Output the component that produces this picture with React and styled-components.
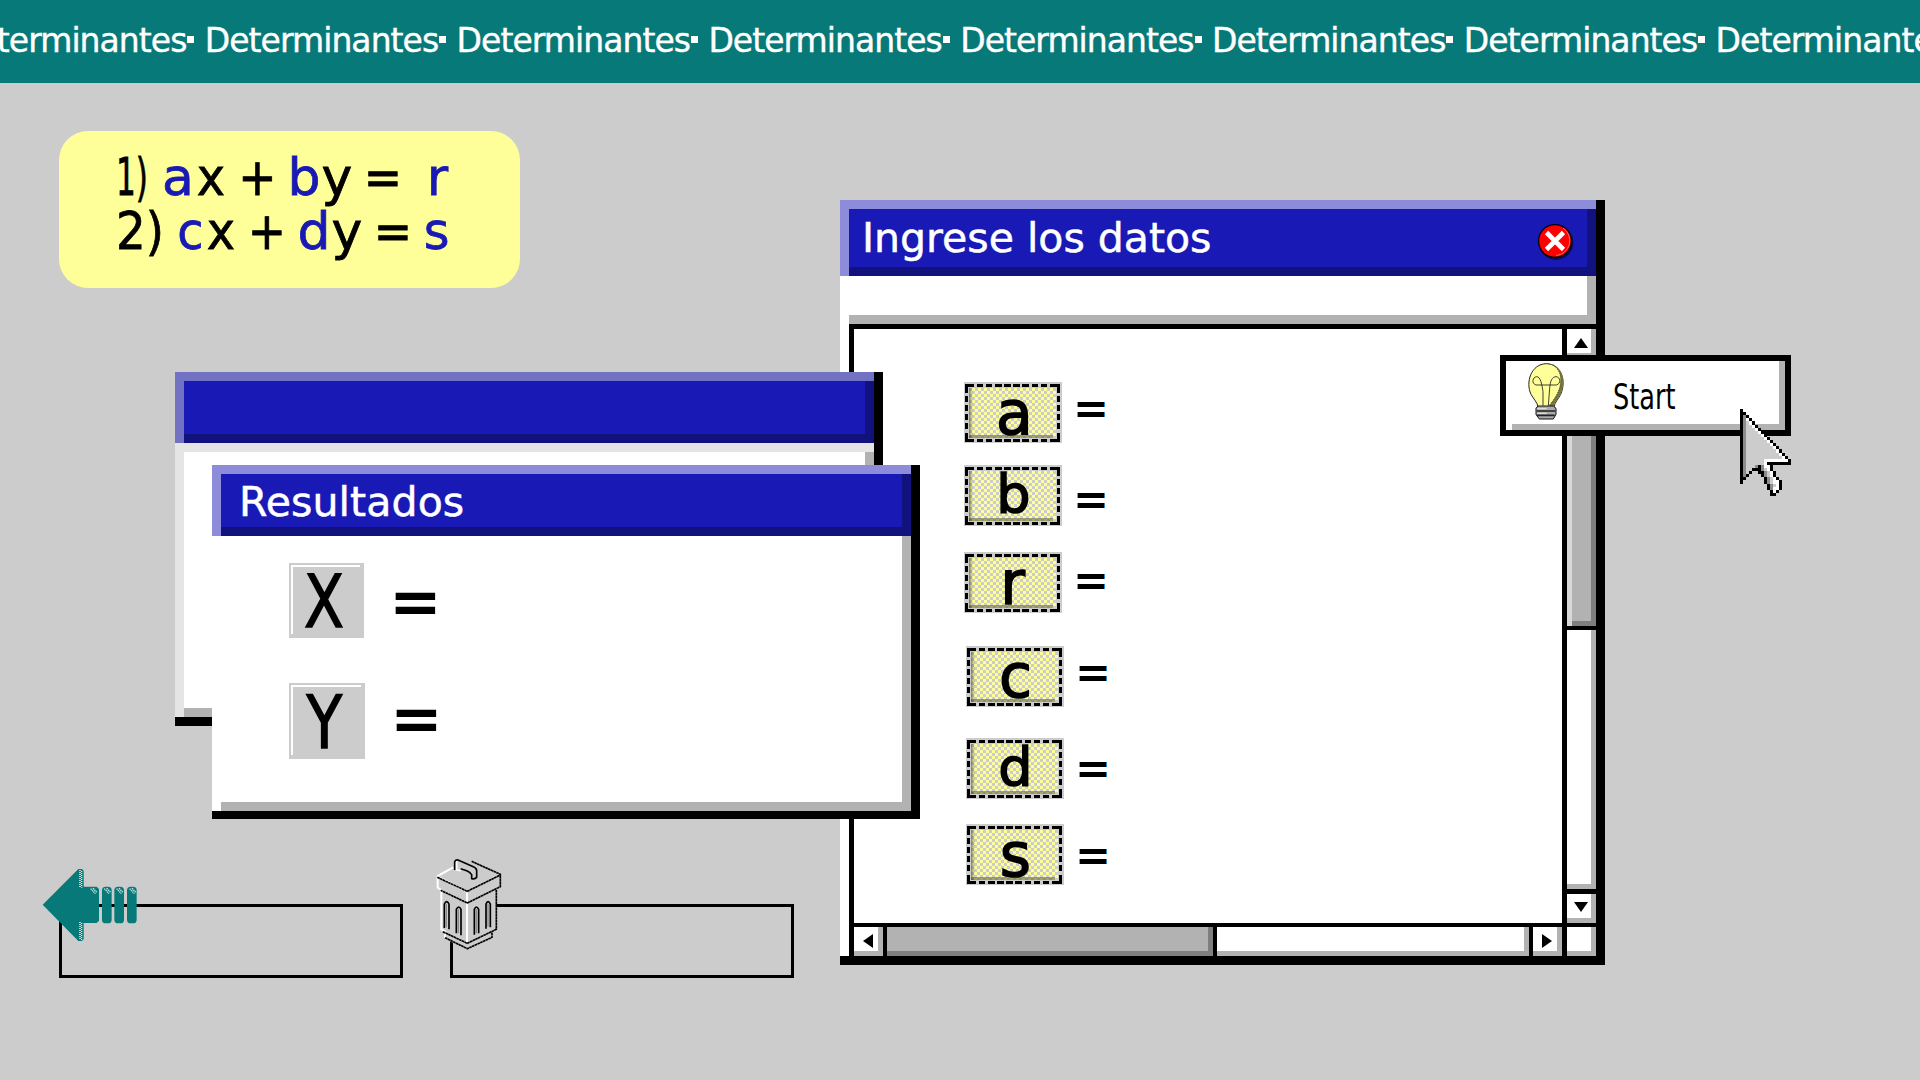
import React from "react";
import styled, { createGlobalStyle } from "styled-components";

const Global = createGlobalStyle`
  * { box-sizing: border-box; }
  body { margin: 0; background: #ccc; overflow: hidden; font-family: "DejaVu Sans", sans-serif; color: #000; }
`;

const Desktop = styled.div`
  position: relative;
  width: 1920px;
  height: 1080px;
  overflow: hidden;
  background: #ccc;
`;

const Banner = styled.header`
  height: 83px;
  display: flex;
  background: #087979;
  color: #fff;
  overflow: hidden;
`;

const BannerTrack = styled.div`
  display: flex;
  margin-left: -47px;
`;

const BannerItem = styled.span`
  flex: none;
  width: 251.8px;
  display: flex;
  align-items: baseline;
  font-size: 33px;
  line-height: 39px;
  padding-top: 21px;
  letter-spacing: -0.95px;
  white-space: nowrap;
  -webkit-text-stroke: 0.4px #fff;
`;

const Bullet = styled.i`
  width: 7px;
  height: 7px;
  margin: 15px 0 0 1px;
  background: #fff;
  align-self: flex-start;
`;

const Equations = styled.section`
  position: absolute;
  left: 59px;
  top: 131px;
  width: 461px;
  height: 157px;
  padding: 14px 0 0 60px;
  border-radius: 29px;
  background: #ffff99;
`;

const EquationRow = styled.div`
  display: flex;
  height: 54px;
  line-height: 64px;
  font-size: 52px;
`;

const Token = styled.span`
  flex: none;
  display: flex;
  justify-content: center;
  width: ${(p) => p.$w}px;
  margin-left: ${(p) => p.$gap || 0}px;
  color: ${(p) => (p.$key ? "#1919b5" : "#000")};
  -webkit-text-stroke: 0.8px ${(p) => (p.$key ? "#1919b5" : "#000")};
  transform: scaleX(${(p) => p.$scale || 1});
`;

const Window = styled.section`
  position: absolute;
  left: ${(p) => p.$x}px;
  top: ${(p) => p.$y}px;
  width: ${(p) => p.$w}px;
  height: ${(p) => p.$h}px;
  display: flex;
  flex-direction: column;
  background: #000;
  padding-right: 9px;
  ${(p) => p.$foot && `padding-bottom: ${p.$foot}px;`}
`;

const TitleBar = styled.div`
  flex: none;
  height: ${(p) => p.$h}px;
  padding: 9px 0 0 9px;
  background: ${(p) => p.$edge};
`;

const TitleFace = styled.div`
  height: 100%;
  display: flex;
  align-items: center;
  justify-content: space-between;
  padding: 0 16px 0 ${(p) => p.$pad || 0}px;
  background: #1919b5;
  box-shadow: inset -9px -9px 0 #12127e;
`;

const Title = styled.h2`
  margin: 0 0 ${(p) => p.$lift}px;
  color: #fff;
  font-size: 41px;
  font-weight: 400;
  line-height: 48px;
  white-space: nowrap;
  letter-spacing: ${(p) => p.$track || 0}px;
  -webkit-text-stroke: 0.5px #fff;
`;

const BackBody = styled.div`
  flex: 1;
  padding: 9px 0 0 9px;
  background: #e5e5e5;
`;

const Face = styled.div`
  height: 100%;
  background: #fff;
  box-shadow: inset -9px -9px 0 #b2b2b2;
`;

const ResultBody = styled.div`
  flex: 1;
  display: flex;
  background: #fff;
  border-right: 9px solid #b2b2b2;
`;

const ResultInner = styled.div`
  flex: 1;
  display: flex;
  flex-direction: column;
  gap: 45px;
  padding: 27px 0 0 77px;
  background: linear-gradient(#b2b2b2, #b2b2b2) 9px 100% / 100% 9px no-repeat, #fff;
`;

const ResultRow = styled.div`
  display: flex;
`;

const ResultKey = styled.div`
  width: ${(p) => p.$s}px;
  height: ${(p) => p.$s}px;
  padding-right: 5px;
  padding-top: 3px;
  display: flex;
  align-items: center;
  justify-content: center;
  background:
    linear-gradient(#fff, #fff) 2px 2px / calc(100% - 6px) 2px no-repeat,
    linear-gradient(#fff, #fff) 2px 2px / 2px calc(100% - 6px) no-repeat,
    #ccc;
  font-size: 73px;
  line-height: 76px;
  -webkit-text-stroke: 1.4px #000;
  span { display: block; transform: scaleX(0.8); }
`;

const ResultEquals = styled.span`
  width: 41px;
  margin: ${(p) => p.$top}px 0 0 31px;
  display: flex;
  justify-content: center;
  height: 40px;
  font-size: 63px;
  line-height: 40px;
  font-weight: 700;
`;

const Toolbar = styled.div`
  flex: none;
  height: 48px;
  padding-left: 9px;
  background: #fff;
`;

const Workspace = styled.div`
  flex: 1;
  border-left: 9px solid #fff;
  background: #000;
  padding: 5px 0 0 5px;
  display: grid;
  grid-template-columns: 708px 29px;
  grid-template-rows: 594px 29px;
  gap: 4px 5px;
`;

const Fields = styled.div`
  background: #fff;
  padding: 53px 0 0 110px;
`;

const FieldRow = styled.div`
  height: 61px;
  display: flex;
  margin-bottom: ${(p) => p.$after}px;
  padding-left: ${(p) => p.$shift}px;
`;

const KeyCap = styled.div`
  width: 98px;
  height: 61px;
  padding: 2px 2px 1px 1px;
  background: #ccc;
`;

const KeyDash = styled.div`
  height: 58px;
  width: 95px;
  padding: 4px;
  background:
    linear-gradient(#000 0 0) 0 0 / 9px 3px no-repeat,
    linear-gradient(#000 0 0) 0 0 / 3px 9px no-repeat,
    linear-gradient(#000 0 0) 100% 0 / 9px 3px no-repeat,
    linear-gradient(#000 0 0) 100% 0 / 3px 9px no-repeat,
    linear-gradient(#000 0 0) 0 100% / 9px 3px no-repeat,
    linear-gradient(#000 0 0) 0 100% / 3px 9px no-repeat,
    linear-gradient(#000 0 0) 100% 100% / 9px 3px no-repeat,
    linear-gradient(#000 0 0) 100% 100% / 3px 9px no-repeat,
    repeating-linear-gradient(90deg, #000 0 6.4px, #ccc 6.4px 9.1px) 12px 0 / 74px 3px no-repeat,
    repeating-linear-gradient(90deg, #000 0 6.4px, #ccc 6.4px 9.1px) 12px 100% / 74px 3px no-repeat,
    repeating-linear-gradient(180deg, #000 0 6.4px, #ccc 6.4px 9px) 0 12px / 3px 34px no-repeat,
    repeating-linear-gradient(180deg, #000 0 6.4px, #ccc 6.4px 9px) 100% 12px / 3px 34px no-repeat,
    #ccc;
`;

const KeyFace = styled.div`
  height: 50px;
  display: flex;
  justify-content: center;
  background:
    linear-gradient(90deg, rgba(60, 60, 20, .6), rgba(60, 60, 20, 0)) 0 0 / 4px 100% no-repeat,
    linear-gradient(rgba(90, 90, 60, .55) 0 0) 0 100% / calc(100% - 3px) 3px no-repeat,
    conic-gradient(#ffff99 25%, #ccc 0 50%, #ffff99 0 75%, #ccc 0) 0 0 / 6px 6px;
  font-size: ${(p) => p.$size}px;
  line-height: 50px;
  -webkit-text-stroke: 1.5px #000;
`;

const KeyLetter = styled.span`
  transform: translate(${(p) => p.$dx}px, ${(p) => p.$dy}px);
`;

const FieldEquals = styled.span`
  width: 28px;
  height: 30px;
  margin: ${(p) => p.$top}px 0 0 15px;
  display: flex;
  justify-content: center;
  font-size: 43px;
  line-height: 30px;
  font-weight: 700;
`;

const VScroll = styled.div`
  background: #000;
  display: grid;
  grid-template-rows: 29px 263px 259px 29px;
  gap: 4.6px;
`;

const HScroll = styled.div`
  background: #000;
  display: grid;
  grid-template-columns: 29px 326px 312px 29px;
  gap: 4px;
`;

const Cell = styled.div`
  display: flex;
  align-items: center;
  justify-content: center;
  padding: 0 2px 2px 0;
  background: #fff;
  box-shadow: inset -5px -5px 0 #b2b2b2;
`;

const Thumb = styled.div`
  background: #b2b2b2;
  border-left: ${(p) => (p.$lit ? "5px solid #d8d8d8" : "0")};
  box-shadow: inset -5px -5px 0 #7f7f7f;
`;

const StartButton = styled.button`
  position: absolute;
  left: 1500px;
  top: 355px;
  width: 291px;
  height: 81px;
  padding: 0;
  border: 6px solid #000;
  border-radius: 0;
  background:
    linear-gradient(#b2b2b2 0 0) 100% 0 / 6px 100% no-repeat,
    linear-gradient(#b2b2b2 0 0) 6px 100% / 100% 6px no-repeat,
    #fff;
  display: flex;
  align-items: flex-start;
  font-family: "DejaVu Sans", sans-serif;
  color: #000;
`;

const StartLabel = styled.span`
  margin: 16px 0 0 37px;
  font-size: 35px;
  line-height: 40px;
  transform-origin: left;
  transform: scaleX(0.73);
`;

const EmptyBox = styled.div`
  position: absolute;
  left: ${(p) => p.$x}px;
  top: 904px;
  width: 344px;
  height: 74px;
  border: 3px solid #000;
`;

const Sprite = styled.svg`
  position: absolute;
  left: ${(p) => p.$x}px;
  top: ${(p) => p.$y}px;
  overflow: visible;
`;

const BulbIcon = styled.svg`
  flex: none;
  margin-left: 10px;
`;

const CloseSvg = styled.svg`
  margin: -2px 4px 0 0;
`;

const Bulb = () => (
  <BulbIcon width="60" height="69" viewBox="0 18 180 207">
    <path d="M66 156 C64 142 54 134 45 118 C28 82 45 27 91 26 C136 27 152 78 134 118 C126 134 116 142 114 156Z" fill="#ffff99" stroke="#222" strokeWidth="3" />
    <path d="M112 30 C142 50 146 100 99 152 L112 155 C116 140 128 132 134 116 C152 78 140 42 112 30Z" fill="#77773f" />
    <path d="M112 30 C142 50 146 100 99 152" fill="none" stroke="#333" strokeWidth="3" strokeDasharray="3 3" />
    <path d="M81 152 V110 C78 90 74 65 62 65 C49 66 46 86 60 90 H121 C136 86 134 66 120 65 C107 66 103 78 101 100 L97 152" fill="none" stroke="#222" strokeWidth="2.6" />
    <path d="M66 153 H112 L120 160 V178 L112 192 H70 L60 178 V160Z" fill="#aaa" stroke="#111" strokeWidth="3" />
    <path d="M62 168 H118 M62 181 H116" stroke="#222" strokeWidth="5" />
    <path d="M64 161 H92 M64 175 H92" stroke="#ddd" strokeWidth="4" />
  </BulbIcon>
);

const CloseIcon = () => (
  <CloseSvg width="40" height="40" viewBox="0 0 40 40">
    <circle cx="20" cy="20.5" r="17.4" fill="#0c0c50" />
    <circle cx="19" cy="19" r="17" fill="#000" />
    <circle cx="19" cy="19" r="15.8" fill="red" />
    <path d="M27 6 A15 15 0 0 1 20 33.5" fill="none" stroke="#ff6666" strokeWidth="1" />
    <path d="M10.5 10.5 L27.5 27.5 M27.5 10.5 L10.5 27.5" stroke="#fff" strokeWidth="4.6" />
  </CloseSvg>
);

const Tri = ({ d }) => (
  <svg width="14" height="14" viewBox="0 0 14 14"><path d={d} fill="#000" /></svg>
);

const CURSOR = [
  "X................",
  "XX...............",
  "XgX..............",
  "XgwX.............",
  "XglwX............",
  "XgllwX...........",
  "XglllwX..........",
  "XgllllwX.........",
  "XglllllwX........",
  "XgllllllwX.......",
  "XglllllllwX......",
  "XgllllllllwX.....",
  "XglllllllllwX....",
  "XgllllllllllwX...",
  "XglllllllllllwX..",
  "XgllllllllllllwX.",
  "XgllllllwwwwwwwwX",
  "XgllllllwXXXXXXXX",
  "XglllgXgwwX......",
  "XgllXXXglwX......",
  "XglX..XXglwX.....",
  "XgX....XglwX.....",
  "XX......XglwX....",
  "X.......XglwwX...",
  ".........XglwX...",
  ".........XgwwX...",
  "..........XwX....",
  "..........XX.....",
];
const INK = { X: "#000", g: "#8c8c8c", l: "#ccc", w: "#fff" };

const Cursor = () => (
  <Sprite $x={1740} $y={409} width="51" height="87" viewBox="0 0 17 28" preserveAspectRatio="none" shapeRendering="crispEdges">
    {CURSOR.flatMap((row, y) =>
      [...row].map((c, x) => (c === "." ? null : <rect key={`${x}-${y}`} x={x} y={y} width="1" height="1" fill={INK[c]} />))
    )}
  </Sprite>
);

const Arrow = () => (
  <Sprite $x={40} $y={864} width="100" height="80" viewBox="60 72 300 240">
    <path d="M68 194 L175 87 H186 L191 92 V140 H230 L237 147 V242 L230 249 H191 V298 L186 303 H175Z" fill="#087979" />
    {[246, 283, 321].map((x) => (
      <rect key={x} x={x} y="140" width="29" height="110" rx="11" fill="#087979" />
    ))}
    <path d="M180 90 V143 M180 246 V300" stroke="#d8eaea" strokeWidth="5" strokeDasharray="3 3" />
    <path d="M185 93 V143 M185 249 V300" stroke="#d8eaea" strokeWidth="4" strokeDasharray="3 3" />
    {[216, 257, 294, 333].map((x) => (
      <path key={x} d={`M${x - 4} 146 l14 15 M${x + 3} 145 l12 12`} stroke="#d8eaea" strokeWidth="4" strokeDasharray="4 2" />
    ))}
  </Sprite>
);

const Trash = () => (
  <Sprite $x={420} $y={840} width="140" height="150" viewBox="0 0 420 450">
    <path d="M53 108 L110 76 L160 63 L241 105 V140 L229 150 V268 L217 278 V294 L142 327 L72 296 V272 L64 268 V148 L53 143Z" fill="#ccc" />
    <g fill="none" strokeWidth="5" strokeLinejoin="round">
      <path d="M100 82 L53 108 V143 L64 150 V268 L75 274 V294 M141 157 V186 M141 190 V308 M60 114 L140 154" stroke="#fff" strokeWidth="6" />
      <path d="M52 112 L142 154 L241 105 M155 64 L241 103 V140 L142 189 L62 151 M229 150 V268 L142 310 L68 275 M75 293 L142 326 L216 292 V276" stroke="#000" strokeDasharray="8 1" />
      <path d="M104 90 V66 Q106 58 114 60 L160 80 Q170 84 170 92 V112 Q166 118 155 116 V104 Q150 96 140 92 L122 86" stroke="#000" />
      <path d="M110 64 V90 L122 92" stroke="#fff" />
      <path d="M73 264 V192 Q80 178 87 192 V268" stroke="#000" />
      <path d="M109 280 V208 Q116 194 123 208 V286" stroke="#000" />
      <path d="M163 284 V208 Q169 194 176 208 V280" stroke="#000" />
      <path d="M198 266 V192 Q204 178 211 192 V262" stroke="#000" />
    </g>
    <path d="M79 192 V262 M115 208 V280 M169 208 V280 M204 192 V260" stroke="#8a8a8a" strokeWidth="4" />
  </Sprite>
);

const FIELDS = [
  { name: "a", size: 60, dx: 2, dy: 0, after: 22, eq: 11 },
  { name: "b", size: 54, dx: 1, dy: -1, after: 26, eq: 19 },
  { name: "r", size: 60, dx: 0, dy: 0, after: 33, eq: 13 },
  { name: "c", size: 60, dx: 1, dy: -1, shift: 2, after: 31, eq: 11 },
  { name: "d", size: 54, dx: 1, dy: -1, shift: 2, after: 25, eq: 15 },
  { name: "s", size: 60, dx: 1, dy: 0, shift: 2, after: 0, eq: 16 },
];

export default function App() {
  return (
    <Desktop>
      <Global />
      <Banner>
        <BannerTrack>
          {Array.from({ length: 8 }, (_, i) => (
            <BannerItem key={i}>Determinantes<Bullet /></BannerItem>
          ))}
        </BannerTrack>
      </Banner>

      <Equations>
        <EquationRow>
          <Token $w={26} $scale={0.6}>1)</Token>
          <Token $w={28} $gap={19} $key>a</Token>
          <Token $w={28} $gap={5} $scale={0.92}>x</Token>
          <Token $w={27} $gap={19} $scale={0.88}>+</Token>
          <Token $w={28} $gap={19} $key>b</Token>
          <Token $w={28} $gap={5}>y</Token>
          <Token $w={28} $gap={18} $scale={0.88}>=</Token>
          <Token $w={23} $gap={29} $key>r</Token>
        </EquationRow>
        <EquationRow>
          <Token $w={42} $scale={0.9}>2)</Token>
          <Token $w={23} $gap={18} $scale={0.92} $key>c</Token>
          <Token $w={28} $gap={5} $scale={0.92}>x</Token>
          <Token $w={28} $gap={18} $scale={0.88}>+</Token>
          <Token $w={28} $gap={19} $key>d</Token>
          <Token $w={28} $gap={5}>y</Token>
          <Token $w={28} $gap={18} $scale={0.88}>=</Token>
          <Token $w={23} $gap={18} $scale={0.95} $key>s</Token>
        </EquationRow>
      </Equations>

      <Window $x={840} $y={200} $w={765} $h={765} $foot={9}>
        <TitleBar $h={76} $edge="#8c8cdb">
          <TitleFace $pad={13}>
            <Title $lift={9}>Ingrese los datos</Title>
            <CloseIcon />
          </TitleFace>
        </TitleBar>
        <Toolbar><Face /></Toolbar>
        <Workspace>
          <Fields>
            {FIELDS.map((f) => (
              <FieldRow key={f.name} $after={f.after} $shift={f.shift || 0}>
                <KeyCap>
                  <KeyDash>
                    <KeyFace $size={f.size}>
                      <KeyLetter $dx={f.dx} $dy={f.dy}>{f.name}</KeyLetter>
                    </KeyFace>
                  </KeyDash>
                </KeyCap>
                <FieldEquals $top={f.eq}>=</FieldEquals>
              </FieldRow>
            ))}
          </Fields>
          <VScroll>
            <Cell><Tri d="M7 2 L14 12 H0Z" /></Cell>
            <Thumb $lit />
            <Cell />
            <Cell><Tri d="M7 12 L14 2 H0Z" /></Cell>
          </VScroll>
          <HScroll>
            <Cell><Tri d="M2 7 L12 0 V14Z" /></Cell>
            <Thumb />
            <Cell />
            <Cell><Tri d="M12 7 L2 0 V14Z" /></Cell>
          </HScroll>
          <Cell />
        </Workspace>
      </Window>

      <Window $x={175} $y={372} $w={708} $h={354} $foot={9}>
        <TitleBar $h={71} $edge="#7272c4"><TitleFace /></TitleBar>
        <BackBody><Face /></BackBody>
      </Window>

      <Window $x={212} $y={465} $w={707.5} $h={354} $foot={8}>
        <TitleBar $h={71} $edge="#8c8cdb">
          <TitleFace $pad={18}><Title $lift={7} $track={0.1}>Resultados</Title></TitleFace>
        </TitleBar>
        <ResultBody>
          <ResultInner>
            <ResultRow>
              <ResultKey $s={75}><span>X</span></ResultKey>
              <ResultEquals $top={19}>=</ResultEquals>
            </ResultRow>
            <ResultRow>
              <ResultKey $s={76}><span>Y</span></ResultKey>
              <ResultEquals $top={16}>=</ResultEquals>
            </ResultRow>
          </ResultInner>
        </ResultBody>
      </Window>

      <StartButton>
        <Bulb />
        <StartLabel>Start</StartLabel>
      </StartButton>

      <EmptyBox $x={59} />
      <EmptyBox $x={449.5} />
      <Arrow />
      <Trash />
      <Cursor />
    </Desktop>
  );
}
